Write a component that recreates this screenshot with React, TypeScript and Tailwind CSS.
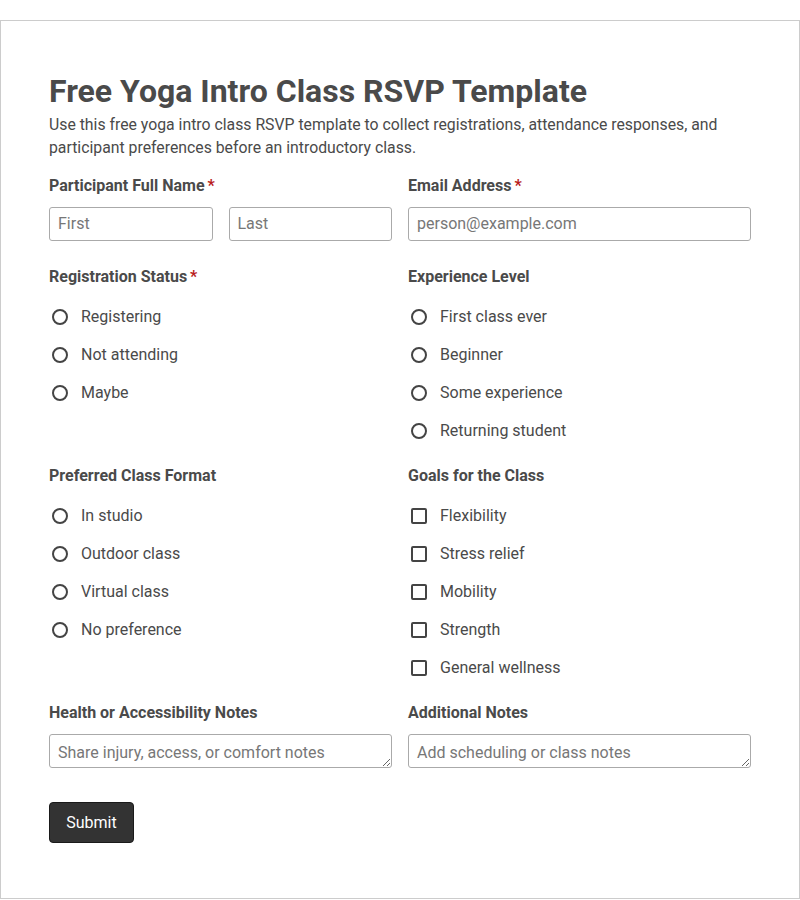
const statusOptions = ["Registering", "Not attending", "Maybe"]
const experienceOptions = ["First class ever", "Beginner", "Some experience", "Returning student"]
const formatOptions = ["In studio", "Outdoor class", "Virtual class", "No preference"]
const goalOptions = ["Flexibility", "Stress relief", "Mobility", "Strength", "General wellness"]

const Label = ({ text, required }: { text: string; required?: boolean }) => (
  <div className="text-[16px] leading-[20px] font-bold text-[#4a4a4a]">
    {text}
    {required && <span className="text-[#b91c1c] ml-[3px]">*</span>}
  </div>
)

const OptionList = ({ name, items, type }: { name: string; items: string[]; type: "radio" | "checkbox" }) => (
  <div className="flex flex-col mt-[11px]">
    {items.map((item) => (
      <label key={item} className="flex items-center h-[38px] text-[16px] text-[#4a4a4a]">
        <span className="w-[32px] flex items-center pl-[3px]">
          {type === "radio" ? (
            <input type="radio" name={name} className="appearance-none w-[16px] h-[16px] rounded-full border-2 border-[#444] bg-white" />
          ) : (
            <input type="checkbox" className="appearance-none w-[16px] h-[16px] rounded-[2px] border-2 border-[#444] bg-white" />
          )}
        </span>
        {item}
      </label>
    ))}
  </div>
)

export default function App() {
  return (
    <div className="pt-[20px] bg-white" style={{ fontFamily: "Roboto, 'Liberation Sans', sans-serif" }}>
      <div className="border border-[#ccc] h-[879px] px-[48px] pt-[51px]">
        <h1 className="text-[32px] leading-[38px] font-bold text-[#4a4a4a]">Free Yoga Intro Class RSVP Template</h1>
        <p className="mt-[3px] text-[15.8px] leading-[23px] text-[#4a4a4a]">
          Use this free yoga intro class RSVP template to collect registrations, attendance responses, and participant preferences before an introductory class.
        </p>

        <div className="grid grid-cols-2 gap-x-[16px] mt-[17px]">
          <div>
            <Label text="Participant Full Name" required />
            <div className="grid grid-cols-2 gap-x-[16px] mt-[11px]">
              <input placeholder="First" className="h-[34px] border border-[#aaa] rounded-[3px] px-[8px] pb-[2px] text-[16px] placeholder-[#777] outline-none" />
              <input placeholder="Last" className="h-[34px] border border-[#aaa] rounded-[3px] px-[8px] pb-[2px] text-[16px] placeholder-[#777] outline-none" />
            </div>
          </div>
          <div>
            <Label text="Email Address" required />
            <input placeholder="person@example.com" className="mt-[11px] w-full h-[34px] border border-[#aaa] rounded-[3px] px-[8px] pb-[2px] text-[16px] placeholder-[#777] outline-none" />
          </div>
        </div>

        <div className="grid grid-cols-2 gap-x-[16px] mt-[26px]">
          <div>
            <Label text="Registration Status" required />
            <OptionList name="status" items={statusOptions} type="radio" />
          </div>
          <div>
            <Label text="Experience Level" />
            <OptionList name="experience" items={experienceOptions} type="radio" />
          </div>
        </div>

        <div className="grid grid-cols-2 gap-x-[16px] mt-[16px]">
          <div>
            <Label text="Preferred Class Format" />
            <OptionList name="format" items={formatOptions} type="radio" />
          </div>
          <div>
            <Label text="Goals for the Class" />
            <OptionList name="goals" items={goalOptions} type="checkbox" />
          </div>
        </div>

        <div className="grid grid-cols-2 gap-x-[16px] mt-[16px]">
          <div>
            <Label text="Health or Accessibility Notes" />
            <textarea rows={1} placeholder="Share injury, access, or comfort notes" className="block mt-[11px] w-full h-[34px] border border-[#aaa] rounded-[3px] px-[8px] pt-[7px] pb-[3px] text-[16px] leading-[22px] placeholder-[#777] outline-none" />
          </div>
          <div>
            <Label text="Additional Notes" />
            <textarea rows={1} placeholder="Add scheduling or class notes" className="block mt-[11px] w-full h-[34px] border border-[#aaa] rounded-[3px] px-[8px] pt-[7px] pb-[3px] text-[16px] leading-[22px] placeholder-[#777] outline-none" />
          </div>
        </div>

        <button className="mt-[34px] h-[41px] w-[85px] bg-[#333] text-white text-[16px] rounded-[4px] border border-[#1a1a1a]">Submit</button>
      </div>
    </div>
  )
}
